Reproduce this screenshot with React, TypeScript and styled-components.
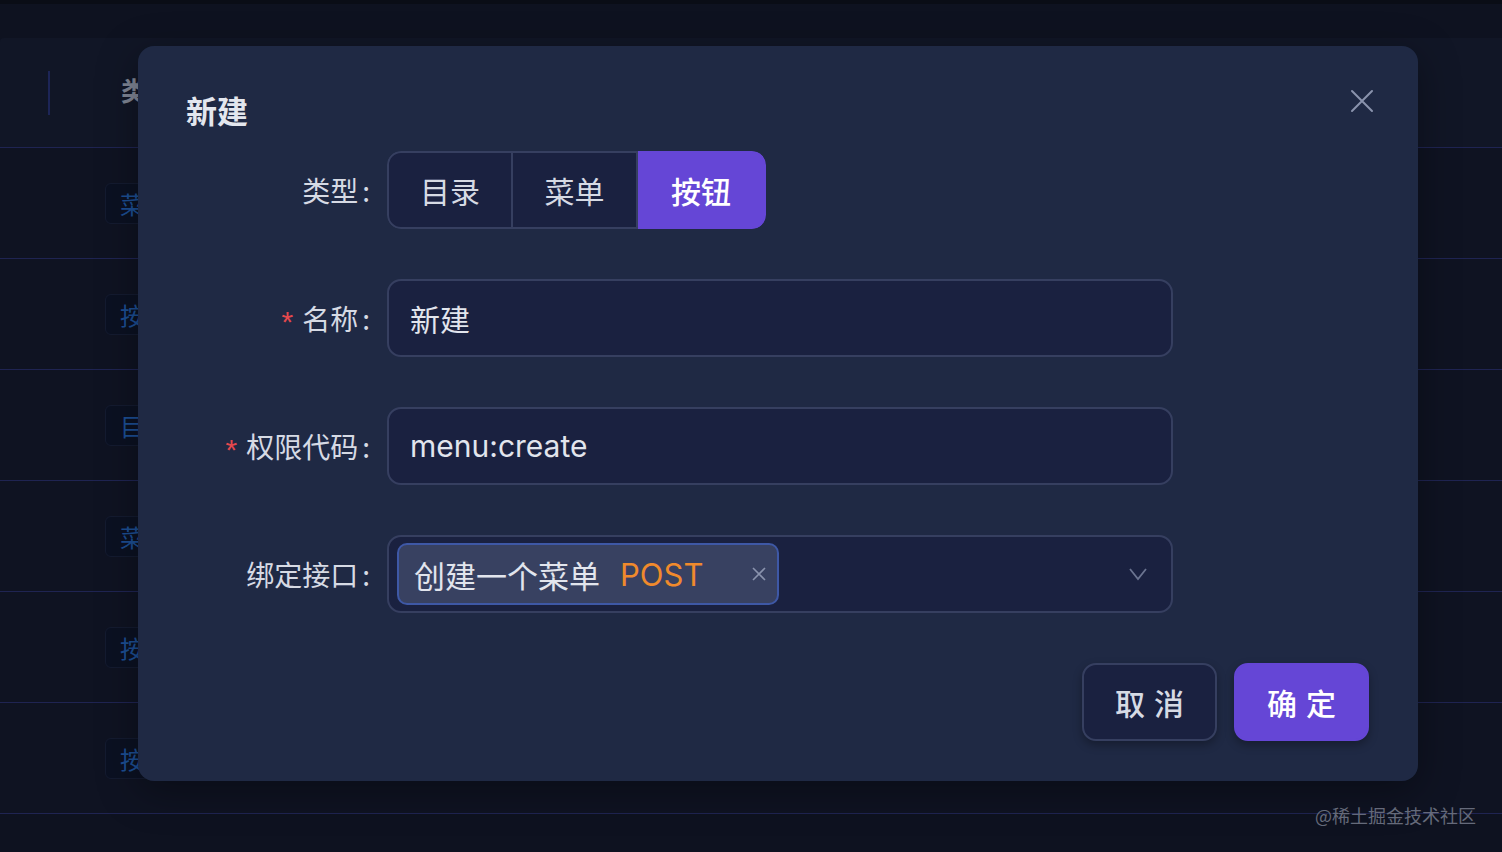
import styled, { createGlobalStyle } from 'styled-components';

const GlobalStyle = createGlobalStyle`
  html, body {
    margin: 0;
    padding: 0;
    background: #0e1220;
    font-family: Inter, "Noto Sans CJK SC", "Noto Sans", sans-serif;
    overflow: hidden;
  }
`;

const Page = styled.div`
  width: 1502px;
  height: 852px;
  background: #0e1220;
  border-top: 4px solid #0a0d16;
  box-sizing: border-box;
  padding-top: 34px;
  position: relative;
  overflow: hidden;
`;

const Table = styled.div`
  display: flex;
  flex-direction: column;
`;

const HeaderRow = styled.div`
  height: 109px;
  background: #111626;
  border-bottom: 1px solid #1f2452;
  display: flex;
  align-items: center;
  border-top-left-radius: 4px;
`;

const HeaderDivider = styled.div`
  width: 2px;
  height: 44px;
  background: #1d2557;
  margin-left: 48px;
`;

const HeaderCell = styled.div`
  margin-left: 71px;
  font-size: 26px;
  font-weight: 700;
  color: #7f8594;
  margin-top: -6px;
  font-family: "Noto Sans CJK SC", sans-serif;
`;

const BodyRow = styled.div`
  height: 110px;
  border-bottom: 1px solid #1f2452;
  display: flex;
  align-items: center;
  padding-left: 105px;
  background: #0f1322;
`;

const Tag = styled.div`
  height: 39px;
  padding: 0 14px;
  background: #0b1122;
  border: 1px solid #141b30;
  border-radius: 6px;
  font-size: 24px;
  line-height: 39px;
  color: #1c4e93;
  font-family: "Noto Sans CJK SC", sans-serif;
`;

const Modal = styled.div`
  position: absolute;
  left: 138px;
  top: 42px;
  width: 1280px;
  height: 735px;
  box-sizing: border-box;
  background: #1f2944;
  border-radius: 16px;
  padding: 44px 49px 40px 48px;
  display: flex;
  flex-direction: column;
  box-shadow: 0 10px 40px rgba(0, 0, 0, 0.35);
`;

const Title = styled.div`
  font-size: 31px;
  font-weight: 700;
  line-height: 40px;
  color: #e3e6ee;
  font-family: "Noto Sans CJK SC", sans-serif;
`;

const CloseButton = styled.button`
  position: absolute;
  top: 39px;
  right: 40px;
  width: 32px;
  height: 32px;
  padding: 0;
  border: none;
  background: transparent;
  display: flex;
  align-items: center;
  justify-content: center;
  color: #8a93ad;
  cursor: pointer;
`;

const Form = styled.div`
  margin-top: 21px;
  display: flex;
  flex-direction: column;
  gap: 50px;
`;

const FormRow = styled.div`
  display: grid;
  grid-template-columns: 184px 786px;
  column-gap: 17px;
  align-items: center;
  height: 78px;
`;

const Label = styled.div`
  display: flex;
  justify-content: flex-end;
  align-items: center;
  font-size: 28px;
  color: #d6dae4;
  font-family: "Noto Sans CJK SC", sans-serif;
`;

const Required = styled.span`
  color: #e5484d;
  font-size: 30px;
  line-height: 1;
  margin-right: 9px;
  margin-top: 8px;
  font-family: "Liberation Sans", sans-serif;
`;

const Colon = styled.span`
  margin-left: 4px;
`;

const Segmented = styled.div`
  display: flex;
  height: 78px;
  width: fit-content;
  border-radius: 14px;
  overflow: hidden;
`;

const Segment = styled.div<{ $active?: boolean; $first?: boolean }>`
  width: ${(p) => (p.$first ? '126px' : '125px')};
  box-sizing: border-box;
  display: flex;
  align-items: center;
  justify-content: center;
  font-size: 30px;
  font-family: "Noto Sans CJK SC", sans-serif;
  color: ${(p) => (p.$active ? '#ffffff' : '#d6dae4')};
  background: ${(p) => (p.$active ? '#6546d6' : '#1a2140')};
  border: 2px solid ${(p) => (p.$active ? '#6546d6' : '#363f60')};
  border-left-width: ${(p) => (p.$first ? '2px' : '0')};
  font-weight: ${(p) => (p.$active ? 500 : 400)};
  &:first-child {
    border-radius: 14px 0 0 14px;
  }
  &:last-child {
    width: 128px;
    border-radius: 0 14px 14px 0;
  }
`;

const InputBox = styled.div`
  height: 78px;
  box-sizing: border-box;
  border: 2px solid #363f60;
  border-radius: 14px;
  background: #1a2140;
  display: flex;
  align-items: center;
  padding-left: 21px;
  font-size: 30px;
  color: #e2e5ed;
`;

const SelectBox = styled(InputBox)`
  padding: 0 22px 0 8px;
  justify-content: space-between;
`;

const SelectTag = styled.div`
  height: 62px;
  width: 382px;
  box-sizing: border-box;
  border: 2px solid #3e58a6;
  border-radius: 10px;
  background: #384161;
  display: flex;
  align-items: center;
  padding: 0 10px 0 15px;
`;

const TagName = styled.span`
  font-size: 31px;
  color: #e2e5ed;
  font-family: "Noto Sans CJK SC", sans-serif;
`;

const TagMethod = styled.span`
  font-size: 31px;
  color: #f08a2c;
  margin-left: 20px;
  font-family: Inter, sans-serif;
`;

const TagClose = styled.span`
  margin-left: auto;
  display: flex;
  color: #8a93ad;
`;

const Footer = styled.div`
  margin-top: 50px;
  display: flex;
  justify-content: flex-end;
  gap: 17px;
`;

const ActionButton = styled.button<{ $primary?: boolean }>`
  width: 135px;
  height: 78px;
  border-radius: 14px;
  box-sizing: border-box;
  border: 2px solid ${(p) => (p.$primary ? '#6546d6' : '#363f60')};
  background: ${(p) => (p.$primary ? '#6546d6' : '#1a2140')};
  color: ${(p) => (p.$primary ? '#ffffff' : '#d6dae4')};
  font-size: 30px;
  font-weight: 500;
  letter-spacing: 9px;
  padding: 0 0 0 9px;
  font-family: "Noto Sans CJK SC", sans-serif;
  box-shadow: 0 4px 10px rgba(0, 0, 0, 0.3);
  cursor: pointer;
`;

const Watermark = styled.div`
  position: absolute;
  right: 26px;
  bottom: 24px;
  font-size: 18px;
  color: #656a7a;
  font-family: "Noto Sans CJK SC", sans-serif;
`;

const rowTags = ['菜单', '按钮', '目录', '菜单', '按钮', '按钮'];

export default function App() {
  return (
    <>
      <GlobalStyle />
      <Page>
        <Table>
          <HeaderRow>
            <HeaderDivider />
            <HeaderCell>类型</HeaderCell>
          </HeaderRow>
          {rowTags.map((tag, i) => (
            <BodyRow key={i}>
              <Tag>{tag}</Tag>
            </BodyRow>
          ))}
        </Table>

        <Modal>
          <Title>新建</Title>
          <CloseButton aria-label="Close">
            <svg width="24" height="24" viewBox="0 0 24 24" fill="none" stroke="currentColor" strokeWidth="2" strokeLinecap="round">
              <path d="M2 2 L22 22 M22 2 L2 22" />
            </svg>
          </CloseButton>

          <Form>
            <FormRow>
              <Label>
                类型<Colon>:</Colon>
              </Label>
              <Segmented>
                <Segment $first>目录</Segment>
                <Segment>菜单</Segment>
                <Segment $active>按钮</Segment>
              </Segmented>
            </FormRow>

            <FormRow>
              <Label>
                <Required>*</Required>名称<Colon>:</Colon>
              </Label>
              <InputBox>新建</InputBox>
            </FormRow>

            <FormRow>
              <Label>
                <Required>*</Required>权限代码<Colon>:</Colon>
              </Label>
              <InputBox>menu:create</InputBox>
            </FormRow>

            <FormRow>
              <Label>
                绑定接口<Colon>:</Colon>
              </Label>
              <SelectBox>
                <SelectTag>
                  <TagName>创建一个菜单</TagName>
                  <TagMethod>POST</TagMethod>
                  <TagClose>
                    <svg width="16" height="16" viewBox="0 0 16 16" fill="none" stroke="currentColor" strokeWidth="1.6">
                      <path d="M2 2 L14 14 M14 2 L2 14" />
                    </svg>
                  </TagClose>
                </SelectTag>
                <svg width="22" height="16" viewBox="0 0 22 16" fill="none" stroke="#6b7490" strokeWidth="1.8">
                  <path d="M3 3 L11 13 L19 3" />
                </svg>
              </SelectBox>
            </FormRow>
          </Form>

          <Footer>
            <ActionButton>取消</ActionButton>
            <ActionButton $primary>确定</ActionButton>
          </Footer>
        </Modal>

        <Watermark>@稀土掘金技术社区</Watermark>
      </Page>
    </>
  );
}
